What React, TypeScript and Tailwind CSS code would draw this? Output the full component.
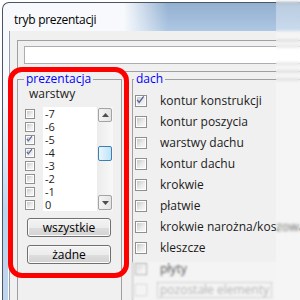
const warstwy = [
  { label: '-7', checked: false },
  { label: '-6', checked: false },
  { label: '-5', checked: true },
  { label: '-4', checked: true },
  { label: '-3', checked: false },
  { label: '-2', checked: false },
  { label: '-1', checked: false },
  { label: '0', checked: false },
]

const dach = [
  { label: 'kontur konstrukcji', checked: true },
  { label: 'kontur poszycia', checked: false },
  { label: 'warstwy dachu', checked: false },
  { label: 'kontur dachu', checked: false },
  { label: 'krokwie', checked: false },
  { label: 'płatwie', checked: false },
  { label: 'krokwie narożna/koszowa', checked: false },
  { label: 'kleszcze', checked: false },
  { label: 'płyty', checked: false },
]

// checkbox w stylu Win7
function Check({ checked = false, small = false, disabled = false }: { checked?: boolean; small?: boolean; disabled?: boolean }) {
  return (
    <div
      className={`relative shrink-0 border bg-white p-px ${small ? 'w-[10px] h-[10px]' : 'w-[12px] h-[12px]'} ${
        disabled ? 'border-[#c4c4c4]' : 'border-[#8f8f8f]'
      }`}
    >
      <div
        className={`w-full h-full ${
          disabled
            ? 'bg-[#f0f0f0]'
            : 'bg-[linear-gradient(135deg,#c9c9c9,#ececec_60%,#f7f7f7)]'
        }`}
      />
      {checked && (
        <svg viewBox="0 0 12 12" className="absolute -left-px -top-px w-full h-full overflow-visible">
          <path d="M2.6 5.8 L5 8.8 L10.4 1.6" fill="none" stroke="#51649a" strokeWidth="1.6" />
        </svg>
      )}
    </div>
  )
}

function ScrollBtn({ up, h }: { up: boolean; h: string }) {
  return (
    <div className={`${h} rounded-[2px] border border-[#a3a3a3] bg-[linear-gradient(to_right,#f4f4f4,#e4e4e4)] flex items-center justify-center`}>
      <svg width="7" height="4" viewBox="0 0 7 4">
        {up ? <path d="M0 4 L3.5 0 L7 4 Z" fill="#4d4d4d" /> : <path d="M0 0 L3.5 4 L7 0 Z" fill="#4d4d4d" />}
      </svg>
    </div>
  )
}

function WinButton({ children }: { children: string }) {
  return (
    <div className="ml-[9px] w-[84px] h-[19px] rounded-[3px] border border-[#707070] shadow-[inset_0_0_0_1px_#fbfbfb] bg-[linear-gradient(to_bottom,#f3f3f3_0%,#ececec_50%,#dedede_51%,#d2d2d2_100%)] flex items-center justify-center text-black">
      {children}
    </div>
  )
}

export default function App() {
  return (
    <div className="relative w-[300px] h-[300px] overflow-hidden bg-white font-['Open_Sans',sans-serif] text-[12px] leading-[14px] text-[#1b1b1b]">
      {/* okno */}
      <div className="ml-[2px] mt-[2px] w-[330px] h-[330px] flex flex-col rounded-tl-[7px] border-l border-t border-[#4a5667] bg-[radial-gradient(ellipse_110px_220px_at_55px_15px,#f7f9fc_60%,rgba(247,249,252,0)_100%),linear-gradient(to_bottom,#93b0d0,#b9d1ec_40px,#c0d6ee)]">
        <div className="h-[28px] shrink-0 pl-[11px] pt-[10px] tracking-[-0.3px] text-black">tryb prezentacji</div>

        <div className="flex-1 ml-[5px] pl-px bg-white">
          <div className="h-full border-l border-[#8d9db2] bg-[#f0f0f0] pl-[7px] pt-[9px]">
            {/* pole tekstowe */}
            <div className="h-[32px] border border-[#a0a0a0] pl-[6px] pt-[5px]">
              <div className="h-[18px] border border-[#abadb3] bg-white" />
            </div>

            <div className="flex gap-[10px]">
              {/* prezentacja */}
              <fieldset className="w-[105px] min-w-0 border border-[#a0a0a0] pb-[10px]">
                <legend className="ml-[6px] px-[2px] leading-[14px] text-[#0000ff]">prezentacja</legend>
                <div className="pl-[11px] pt-px">warstwy</div>

                <div className="mt-[6px] flex">
                  <div className="ml-[7px] w-[10px] flex flex-col">
                    {warstwy.map((w) => (
                      <div key={w.label} className="h-[13px] flex items-center">
                        <Check small checked={w.checked} />
                      </div>
                    ))}
                  </div>
                  <div className="ml-[8px] w-[70px] h-[104px] bg-white flex">
                    <div className="flex-1 pl-[2px] text-[11px]">
                      {warstwy.map((w) => (
                        <div key={w.label} className="h-[13px] leading-[13px]">
                          {w.label}
                        </div>
                      ))}
                    </div>
                    <div className="w-[16px] p-px flex flex-col bg-[linear-gradient(to_right,#ececec,#f8f8f8)]">
                      <ScrollBtn up h="h-[14px]" />
                      <div className="mt-[24px] h-[15px] rounded-[2px] border border-[#3c7fb1] bg-[linear-gradient(to_right,#eaf6fd,#bfe3f8)]" />
                      <div className="flex-1" />
                      <ScrollBtn up={false} h="h-[15px]" />
                    </div>
                  </div>
                </div>

                <div className="mt-[7px]">
                  <WinButton>wszystkie</WinButton>
                </div>
                <div className="mt-[8px]">
                  <WinButton>żadne</WinButton>
                </div>
              </fieldset>

              {/* dach */}
              <fieldset className="flex-1 min-w-0 border border-[#a0a0a0]">
                <legend className="ml-px px-[2px] leading-[14px] text-[#0000ff]">dach</legend>
                <div className="pt-[4px] pl-[2px]">
                  {dach.map((d) => (
                    <div key={d.label} className="h-[21px] flex items-center whitespace-nowrap">
                      <Check checked={d.checked} />
                      <span className="ml-[13px]">{d.label}</span>
                    </div>
                  ))}
                  <div className="h-[21px] flex items-center whitespace-nowrap">
                    <Check disabled />
                    <span className="ml-[10px] px-[2px] border border-dotted border-[#9a9a9a] text-[#a2a2a2]">
                      pozostałe elementy
                    </span>
                  </div>
                </div>
              </fieldset>
            </div>
          </div>
        </div>
      </div>

      {/* rozmycie przy krawędziach zrzutu */}
      <div className="absolute top-0 right-0 w-[24px] h-full bg-white/35 backdrop-blur-[1.5px]" />
      <div className="absolute left-[130px] top-[262px] right-[24px] bottom-0 bg-white/25 backdrop-blur-[1px]" />

      {/* czerwone zaznaczenie */}
      <div className="absolute left-[8px] top-[67px] w-[121px] h-[211px] rounded-[14px] border-[5px] border-[#ff0000]" />
    </div>
  )
}
